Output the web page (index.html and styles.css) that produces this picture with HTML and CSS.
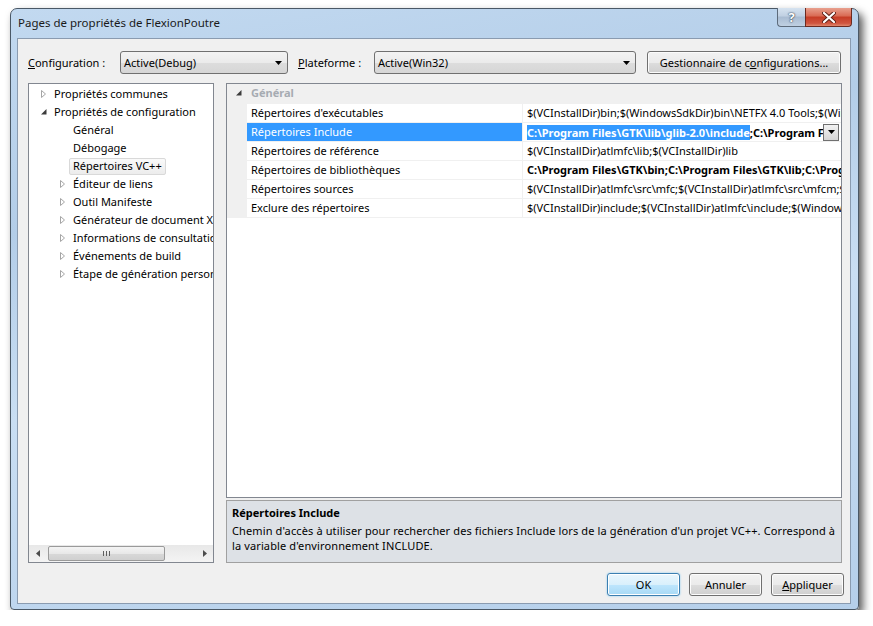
FILE: index.html
```html
<!DOCTYPE html>
<html lang="fr">
<head>
    <meta charset="UTF-8">
    <title>Pages de propriétés de FlexionPoutre</title>
    <link rel="stylesheet" href="styles.css">
</head>
<body>
    <div class="window">
        <div class="titlebar">
            <span class="title">Pages de propriétés de FlexionPoutre</span>
            <div class="caption-buttons">
                <div class="cap-btn cap-help">?</div>
                <div class="cap-btn cap-close">
                    <svg width="14" height="11" viewBox="0 0 14 11">
                        <path d="M2 1 L12 10 M12 1 L2 10" stroke="#5a1f16" stroke-width="4" stroke-linecap="round"/>
                        <path d="M2 1 L12 10 M12 1 L2 10" stroke="#fff" stroke-width="2.2" stroke-linecap="round"/>
                    </svg>
                </div>
            </div>
        </div>

        <div class="client">
            <div class="config-row">
                <span class="lbl lbl-config"><u>C</u>onfiguration :</span>
                <div class="combo combo-config">
                    <span>Active(Debug)</span>
                    <svg width="7" height="4" viewBox="0 0 7 4"><path d="M0 0 H7 L3.5 4 Z" fill="#000"/></svg>
                </div>
                <span class="lbl lbl-platform"><u>P</u>lateforme :</span>
                <div class="combo combo-platform">
                    <span>Active(Win32)</span>
                    <svg width="7" height="4" viewBox="0 0 7 4"><path d="M0 0 H7 L3.5 4 Z" fill="#000"/></svg>
                </div>
                <button class="btn btn-manager">Gestionnaire de c<u>o</u>nfigurations...</button>
            </div>

            <div class="main">
                <div class="tree">
                    <ul class="tree-items">
                        <li class="tree-row lvl1"><span class="exp"><svg width="5" height="8" viewBox="0 0 5 8"><path d="M0.5 0.5 L4.5 4 L0.5 7.5 Z" fill="none" stroke="#a5a5a5"/></svg></span><span class="node">Propriétés communes</span></li>
                        <li class="tree-row lvl1"><span class="exp"><svg width="6" height="6" viewBox="0 0 6 6"><path d="M5.5 0 V5.5 H0 Z" fill="#3c3c3c"/></svg></span><span class="node">Propriétés de configuration</span></li>
                        <li class="tree-row lvl2"><span class="exp"></span><span class="node">Général</span></li>
                        <li class="tree-row lvl2"><span class="exp"></span><span class="node">Débogage</span></li>
                        <li class="tree-row lvl2"><span class="exp"></span><span class="node selected">Répertoires VC++</span></li>
                        <li class="tree-row lvl2"><span class="exp"><svg width="5" height="8" viewBox="0 0 5 8"><path d="M0.5 0.5 L4.5 4 L0.5 7.5 Z" fill="none" stroke="#a5a5a5"/></svg></span><span class="node">Éditeur de liens</span></li>
                        <li class="tree-row lvl2"><span class="exp"><svg width="5" height="8" viewBox="0 0 5 8"><path d="M0.5 0.5 L4.5 4 L0.5 7.5 Z" fill="none" stroke="#a5a5a5"/></svg></span><span class="node">Outil Manifeste</span></li>
                        <li class="tree-row lvl2"><span class="exp"><svg width="5" height="8" viewBox="0 0 5 8"><path d="M0.5 0.5 L4.5 4 L0.5 7.5 Z" fill="none" stroke="#a5a5a5"/></svg></span><span class="node">Générateur de document XML</span></li>
                        <li class="tree-row lvl2"><span class="exp"><svg width="5" height="8" viewBox="0 0 5 8"><path d="M0.5 0.5 L4.5 4 L0.5 7.5 Z" fill="none" stroke="#a5a5a5"/></svg></span><span class="node">Informations de consultation</span></li>
                        <li class="tree-row lvl2"><span class="exp"><svg width="5" height="8" viewBox="0 0 5 8"><path d="M0.5 0.5 L4.5 4 L0.5 7.5 Z" fill="none" stroke="#a5a5a5"/></svg></span><span class="node">Événements de build</span></li>
                        <li class="tree-row lvl2"><span class="exp"><svg width="5" height="8" viewBox="0 0 5 8"><path d="M0.5 0.5 L4.5 4 L0.5 7.5 Z" fill="none" stroke="#a5a5a5"/></svg></span><span class="node">Étape de génération personnalisée</span></li>
                    </ul>
                    <div class="hscroll">
                        <span class="sb-arrow"><svg width="4" height="7" viewBox="0 0 4 7"><path d="M4 0 V7 L0 3.5 Z" fill="#4d4d4d"/></svg></span>
                        <div class="sb-track">
                            <div class="sb-thumb"><span class="grip"></span></div>
                        </div>
                        <span class="sb-arrow"><svg width="4" height="7" viewBox="0 0 4 7"><path d="M0 0 V7 L4 3.5 Z" fill="#4d4d4d"/></svg></span>
                    </div>
                </div>

                <div class="right">
                    <div class="grid">
                        <div class="cat-row">
                            <span class="cat-exp"><svg width="6" height="6" viewBox="0 0 6 6"><path d="M5.5 0 V5.5 H0 Z" fill="#3c3c3c"/></svg></span>
                            <span class="cat-name">Général</span>
                        </div>
                        <div class="prop-row">
                            <span class="gutter"></span>
                            <span class="pname">Répertoires d'exécutables</span>
                            <span class="pval">$(VCInstallDir)bin;$(WindowsSdkDir)bin\NETFX 4.0 Tools;$(WindowsSdkDir)bin;$(VSInstallDir)Common7\Tools\bin</span>
                        </div>
                        <div class="prop-row active">
                            <span class="gutter"></span>
                            <span class="pname">Répertoires Include</span>
                            <span class="pval bold">
                                <span class="pval-text"><span class="sel-text">C:\Program Files\GTK\lib\glib-2.0\include</span>;C:\Program Files\GTK\include</span>
                                <span class="drop-btn"><svg width="7" height="4" viewBox="0 0 7 4"><path d="M0 0 H7 L3.5 4 Z" fill="#000"/></svg></span>
                            </span>
                        </div>
                        <div class="prop-row">
                            <span class="gutter"></span>
                            <span class="pname">Répertoires de référence</span>
                            <span class="pval">$(VCInstallDir)atlmfc\lib;$(VCInstallDir)lib</span>
                        </div>
                        <div class="prop-row">
                            <span class="gutter"></span>
                            <span class="pname">Répertoires de bibliothèques</span>
                            <span class="pval bold">C:\Program Files\GTK\bin;C:\Program Files\GTK\lib;C:\Program Files\GTK\lib\glib-2.0</span>
                        </div>
                        <div class="prop-row">
                            <span class="gutter"></span>
                            <span class="pname">Répertoires sources</span>
                            <span class="pval">$(VCInstallDir)atlmfc\src\mfc;$(VCInstallDir)atlmfc\src\mfcm;$(VCInstallDir)atlmfc\src\atl</span>
                        </div>
                        <div class="prop-row">
                            <span class="gutter"></span>
                            <span class="pname">Exclure des répertoires</span>
                            <span class="pval">$(VCInstallDir)include;$(VCInstallDir)atlmfc\include;$(WindowsSdkDir)include</span>
                        </div>
                    </div>

                    <div class="desc">
                        <div class="desc-title">Répertoires Include</div>
                        <div class="desc-text">Chemin d'accès à utiliser pour rechercher des fichiers Include lors de la génération d'un projet VC++. Correspond à<br>la variable d'environnement INCLUDE.</div>
                    </div>
                </div>
            </div>

            <div class="buttons">
                <button class="btn btn-default">OK</button>
                <button class="btn">Annuler</button>
                <button class="btn"><u>A</u>ppliquer</button>
            </div>
        </div>
    </div>
</body>
</html>
```

FILE: styles.css
```css
body {
    margin: 0;
    background: #fff;
    font-family: "Noto Sans", sans-serif;
    font-size: 11px;
    color: #000;
}

.window {
    margin: 8px 0 0 10px;
    width: 849px;
    height: 602px;
    box-sizing: border-box;
    border: 1px solid #4a5866;
    border-radius: 7px 7px 4px 4px;
    padding: 0 7px 5px 6px;
    background: linear-gradient(170deg, #c2d9f0 0%, #b3cde8 30%, #c9def3 55%, #b5cfea 100%);
    box-shadow: 4px 5px 9px rgba(0, 0, 0, 0.65);
    display: flex;
    flex-direction: column;
}

.titlebar {
    height: 29px;
    display: flex;
    justify-content: space-between;
    align-items: flex-start;
}

.title {
    margin: 6px 0 0 1px;
    font-size: 11.5px;
    color: #1a1a1a;
}

.caption-buttons {
    display: flex;
    margin: -1px -1px 0 0;
}

.cap-btn {
    height: 19px;
    box-sizing: border-box;
    display: flex;
    align-items: center;
    justify-content: center;
    border: 1px solid #5d6b7b;
    border-top: none;
}

.cap-help {
    width: 28px;
    border-right: none;
    border-radius: 0 0 0 4px;
    background: linear-gradient(#d6e3f0 0%, #c0d0e2 45%, #a9bcd2 50%, #bfd0e2 100%);
    color: #fff;
    font-weight: bold;
    font-size: 13px;
    text-shadow: 0 0 2px #2b3a4a, 0 0 1px #2b3a4a;
}

.cap-close {
    width: 47px;
    border-radius: 0 0 4px 0;
    border-color: #6b2a20;
    background: linear-gradient(#e8a08e 0%, #d96a53 45%, #c63c25 50%, #d05540 85%, #e0876d 100%);
}

.client {
    flex: 1;
    border: 1px solid #8a9bb0;
    background: #f0f0f0;
    display: flex;
    flex-direction: column;
}

.config-row {
    display: flex;
    align-items: center;
    height: 23px;
    margin: 12px 0 0 10px;
}

.config-row > * {
    flex-shrink: 0;
}

.lbl {
    white-space: nowrap;
}

.lbl-config {
    width: 92px;
}

.lbl-platform {
    width: 76px;
    margin-left: 10px;
}

.combo {
    height: 23px;
    box-sizing: border-box;
    border: 1px solid #707070;
    border-radius: 3px;
    background: linear-gradient(#f3f3f3 0%, #ebebeb 50%, #dddddd 51%, #d6d6d6 100%);
    display: flex;
    align-items: center;
    justify-content: space-between;
    padding: 0 5px 0 3px;
}

.combo-config {
    width: 168px;
}

.combo-platform {
    width: 262px;
}

.btn {
    font-family: inherit;
    font-size: 11px;
    color: #000;
    height: 23px;
    box-sizing: border-box;
    border: 1px solid #707070;
    border-radius: 3px;
    background: linear-gradient(#f2f2f2 0%, #ebebeb 50%, #dddddd 51%, #cfcfcf 100%);
    box-shadow: inset 0 0 0 1px #fcfcfc;
    padding: 0;
}

.btn-manager {
    width: 194px;
    margin-left: 11px;
}

.main {
    display: flex;
    height: 480px;
    margin: 9px 0 0 10px;
}

.tree {
    width: 186px;
    flex-shrink: 0;
    box-sizing: border-box;
    border: 1px solid #828790;
    background: #fff;
    display: flex;
    flex-direction: column;
}

.tree-items {
    flex: 1;
    list-style: none;
    margin: 0;
    padding: 1px 0 0 0;
    overflow: hidden;
}

.tree-row {
    height: 18px;
    display: flex;
    align-items: center;
    white-space: nowrap;
}

.lvl1 {
    padding-left: 7px;
}

.lvl2 {
    padding-left: 26px;
}

.exp {
    width: 14px;
    flex-shrink: 0;
    display: flex;
    align-items: center;
    padding-left: 5px;
    box-sizing: border-box;
}

.node {
    height: 17px;
    box-sizing: border-box;
    line-height: 13px;
    border: 1px solid transparent;
    padding: 0 3px;
}

.node.selected {
    border-color: #d9d9d9;
    border-radius: 2px;
    background: linear-gradient(#fafafa, #ececec);
}

.hscroll {
    height: 17px;
    display: flex;
    align-items: center;
    background: linear-gradient(#e8e8e8, #f4f4f4);
}

.sb-arrow {
    width: 17px;
    height: 17px;
    display: flex;
    align-items: center;
    justify-content: center;
}

.sb-track {
    flex: 1;
    height: 17px;
    position: relative;
}

.sb-thumb {
    position: absolute;
    left: 2px;
    top: 1px;
    width: 117px;
    height: 15px;
    box-sizing: border-box;
    border: 1px solid #9a9a9a;
    border-radius: 2px;
    background: linear-gradient(#f4f4f4 0%, #e8e8e8 50%, #d8d8d8 51%, #d0d0d0 100%);
    display: flex;
    align-items: center;
    justify-content: center;
}

.grip {
    width: 7px;
    height: 5px;
    background: repeating-linear-gradient(90deg, #5f5f5f 0 1px, transparent 1px 3px);
}

.right {
    width: 616px;
    flex-shrink: 0;
    margin-left: 12px;
    display: flex;
    flex-direction: column;
}

.grid {
    flex: 1;
    border: 1px solid #828790;
    background: #fff;
    overflow: hidden;
}

.cat-row {
    height: 20px;
    background: #f0f0f0;
    display: flex;
    align-items: flex-start;
}

.cat-exp {
    width: 24px;
    height: 18px;
    padding-left: 9px;
    box-sizing: border-box;
    display: flex;
    align-items: center;
}

.cat-name {
    color: #a6abb2;
    font-weight: bold;
    line-height: 17px;
}

.prop-row {
    height: 19px;
    box-sizing: border-box;
    display: flex;
    white-space: nowrap;
}

.gutter {
    width: 20px;
    flex-shrink: 0;
    background: #f0f0f0;
}

.pname {
    width: 276px;
    flex-shrink: 0;
    box-sizing: border-box;
    padding-left: 4px;
    line-height: 17px;
    border-right: 1px solid #f0f0f0;
    border-bottom: 1px solid #f0f0f0;
}

.pval {
    flex: 1;
    min-width: 0;
    overflow: hidden;
    padding-left: 4px;
    line-height: 17px;
    border-bottom: 1px solid #f0f0f0;
}

.bold {
    font-weight: bold;
}

.active .pname {
    background: #3399ff;
    color: #fff;
}

.active .pval {
    display: flex;
    align-items: center;
    padding-right: 2px;
}

.pval-text {
    flex: 1;
    min-width: 0;
    overflow: hidden;
}

.sel-text {
    background: #3399ff;
    color: #fff;
}

.drop-btn {
    width: 16px;
    height: 17px;
    flex-shrink: 0;
    box-sizing: border-box;
    border: 1px solid #707070;
    background: linear-gradient(#f2f2f2, #d6d6d6);
    display: flex;
    align-items: center;
    justify-content: center;
}

.desc {
    height: 63px;
    margin-top: 2px;
    box-sizing: border-box;
    border: 1px solid #a0a0a0;
    background: #dde1e6;
    padding: 4px 4px 0 5px;
    line-height: 15px;
}

.desc-title {
    font-weight: bold;
    margin-bottom: 3px;
}

.desc-text {
    white-space: nowrap;
    letter-spacing: 0.12px;
}

.buttons {
    display: flex;
    justify-content: flex-end;
    gap: 9px;
    margin: 10px 6px 0 0;
}

.buttons .btn {
    width: 73px;
}

.btn-default {
    border-color: #3c7fb1;
    background: linear-gradient(#eaf6fd 0%, #d9f0fc 50%, #bee6fd 51%, #a7d9f5 100%);
    box-shadow: inset 0 0 0 1px #fff, 0 0 2px #7ac5f0;
}
```
